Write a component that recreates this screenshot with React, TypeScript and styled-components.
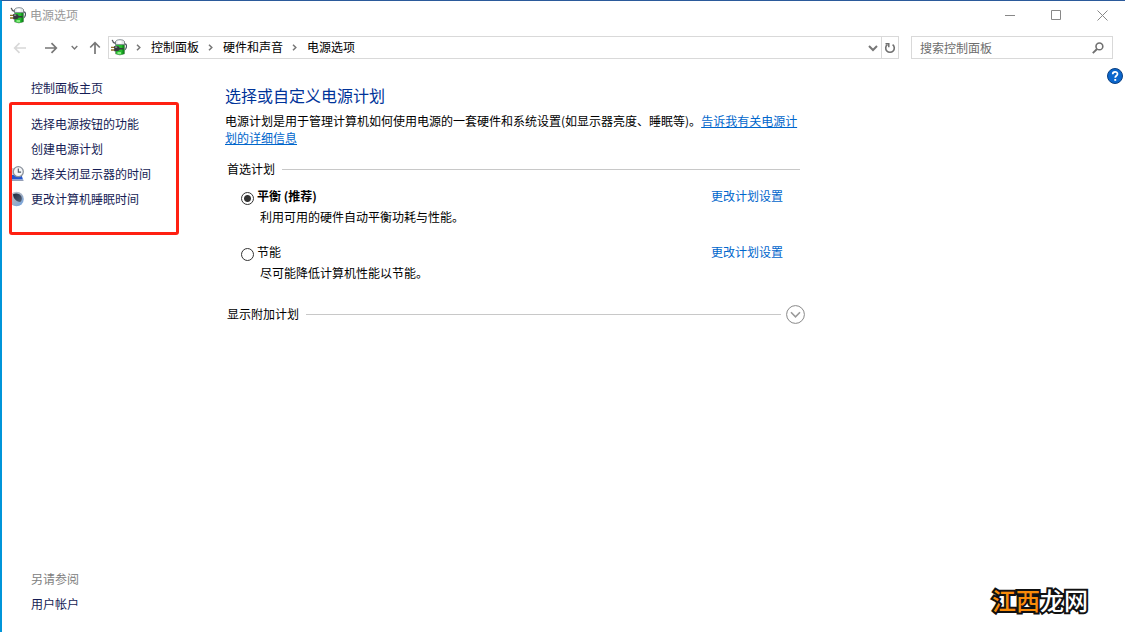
import React, { useState } from "react";
import styled, { createGlobalStyle } from "styled-components";

const GlobalStyle = createGlobalStyle`
  *, *::before, *::after { box-sizing: border-box; }
  body {
    margin: 0;
    background: #fff;
    color: #000;
    font: 12px/17px "Noto Sans CJK SC", sans-serif;
  }
  button, input { font: inherit; color: inherit; }
  svg { display: block; flex: none; }
`;

const Window = styled.div`
  position: relative;
  display: flex;
  flex-direction: column;
  min-height: 100vh;
  border-left: 2px solid #0095d9;
  border-top: 1px solid #2b5a9b;
`;

const TitleBar = styled.header`
  display: flex;
  align-items: center;
  height: 29px;
  padding-left: 8px;
`;

const WindowTitle = styled.span`
  flex: 1;
  margin-left: 4px;
  padding-bottom: 2px;
  color: #999;
`;

const PlainButton = styled.button`
  display: flex;
  align-items: center;
  justify-content: center;
  padding: 0;
  border: 0;
  background: none;
`;

const CaptionButton = styled(PlainButton)`
  width: 46px;
  height: 29px;
`;

const NavBar = styled.div`
  display: flex;
  align-items: center;
  height: 35px;
  padding: 0 12px 0 11px;
`;

const ArrowButton = styled(PlainButton)<{ $gap: number }>`
  margin-right: ${(p) => p.$gap}px;
`;

const AddressBar = styled.nav`
  display: flex;
  flex: 1;
  align-items: center;
  height: 23px;
  padding-left: 2px;
  border: 1px solid #d9d9d9;
`;

const Crumb = styled.a`
  padding-bottom: 2px;
  color: #000;
  text-decoration: none;
`;

const CrumbArrow = styled.svg`
  margin: 0 10px 0 9px;
`;

const DropButton = styled(PlainButton)`
  width: 16px;
  height: 21px;
  margin-left: auto;
`;

const RefreshButton = styled(PlainButton)`
  width: 17px;
  height: 21px;
  border-left: 1px solid #d9d9d9;
`;

const SearchBox = styled.label`
  display: flex;
  align-items: center;
  width: 202px;
  height: 23px;
  margin-left: 12px;
  padding: 0 8px;
  border: 1px solid #d9d9d9;
`;

const SearchInput = styled.input`
  flex: 1;
  min-width: 0;
  height: 17px;
  padding: 0;
  border: 0;
  outline: 0;
  background: none;
  &::placeholder { color: #6d6d6d; opacity: 1; }
`;

const Body = styled.div`
  display: flex;
  flex: 1;
`;

const Sidebar = styled.aside`
  display: flex;
  flex: none;
  flex-direction: column;
  width: 223px;
  padding: 10px 0 16px 7px;
  line-height: 25px;
`;

const SideLink = styled.a`
  display: flex;
  align-items: center;
  height: 25px;
  padding-left: 22px;
  color: #151c55;
  text-decoration: none;
`;

const TaskLink = styled(SideLink)`
  padding-left: 0;
`;

const TaskIcon = styled.span`
  width: 22px;
`;

const TaskList = styled.nav`
  position: relative;
  width: 170px;
  margin-top: 2px;
  padding: 9px 0 24px;
  &::after {
    content: "";
    position: absolute;
    inset: 0;
    border: 3px solid #ff2012;
    border-radius: 3px;
    pointer-events: none;
  }
`;

const SeeAlso = styled.div`
  margin-top: auto;
`;

const SeeAlsoTitle = styled.div`
  padding-left: 22px;
  color: #808080;
`;

const Main = styled.main`
  flex: 1;
  max-width: 580px;
  padding-top: 18px;
`;

const Heading = styled.h1`
  margin: 0;
  color: #003399;
  font-size: 16px;
  font-weight: 400;
  line-height: 24px;
`;

const Intro = styled.p`
  margin: 5px 7px 0 0;
`;

const BlueLink = styled.a<{ $underline?: boolean }>`
  color: #0066cc;
  text-decoration: ${(p) => (p.$underline ? "underline" : "none")};
`;

const SectionHead = styled.div<{ $top: number; $right: number }>`
  display: flex;
  align-items: center;
  height: 20px;
  margin: ${(p) => p.$top}px ${(p) => p.$right}px 0 2px;
`;

const SectionTitle = styled.h2`
  margin: 0;
  padding-bottom: 2px;
  font-size: 12px;
  font-weight: 400;
  line-height: 17px;
`;

const Rule = styled.span<{ $right?: number }>`
  flex: 1;
  height: 1px;
  margin: 0 ${(p) => p.$right ?? 0}px 0 7px;
  background: #c8c8c8;
`;

const PlanRow = styled.div`
  display: grid;
  grid-template-columns: 16px 1fr auto;
  row-gap: 3px;
  margin: 8px 22px 0 16px;
  & + & { margin-top: 18px; }
`;

const Radio = styled.input`
  appearance: none;
  width: 13px;
  height: 13px;
  margin: 5px 0 0;
  border: 1px solid #333;
  border-radius: 50%;
  background: #fff;
  &:checked { background: radial-gradient(circle, #333 3px, #fff 4px); }
`;

const PlanLabel = styled.label<{ $strong: boolean }>`
  font-weight: ${(p) => (p.$strong ? 700 : 400)};
`;

const PlanText = styled.p`
  grid-column: 2 / 4;
  margin: 0 0 0 3px;
`;

const HelpButton = styled(PlainButton)`
  align-self: flex-start;
  margin: 3px 2px 0 auto;
`;

const Watermark = styled.div`
  position: absolute;
  right: 37px;
  bottom: 17px;
  color: #fff;
  font-size: 24px;
  font-weight: 500;
  line-height: 30px;
  paint-order: stroke fill;
  -webkit-text-stroke: 4px #111;
`;

const WatermarkAccent = styled.span`
  color: #f98b0a;
`;

const PowerIcon = () => (
  <svg width="16" height="17" viewBox="0 0 16 17" aria-hidden="true">
    <path d="M13 4.800h.8q1.900.2 1.700 2.700-.2 2.600-2.500 4" fill="none" stroke="#4a5560" strokeWidth="1.200" />
    <path d="M4.500 2.500v12.300q4.200 2.200 9 0V2.500z" fill="#eef3ee" stroke="#69756c" strokeWidth=".7" />
    <path d="M4.800 5.500h8.400v9.200q-4.200 1.900-8.400 0z" fill="#27bb30" />
    <path d="M11.400 5.500h1.800v9.200l-1.800.6z" fill="#118a1c" />
    <path d="M6.500 13h3.500v2H6.500z" fill="#86ec7e" />
    <path d="M4.500 2.700Q5 .6 9 .6t4.500 2.100v2.800h-9z" fill="#e3e7ea" stroke="#6c757b" strokeWidth=".7" />
    <path d="M6.500 1.800h4v2.900h-4z" fill="#fff" />
    <path d="M1.200.8q.5 2.600 3.300 3.700" fill="none" stroke="#55595d" strokeWidth="1.300" />
    <path d="M0 8.300h4M0 11h4" stroke="#8d6f25" strokeWidth="1.300" />
    <path d="M3.200 7h2.600q2.400.2 2.900 1.900h3.800v1.500H8.700q-.6 1.700-2.900 1.900H3.200z" fill="#36393d" />
    <path d="M4 8.100h2.200" stroke="#b3b7ba" />
  </svg>
);

const CrumbChevron = () => (
  <CrumbArrow width="5" height="7" viewBox="0 0 5 7" aria-hidden="true">
    <path d="M1 .8 3.800 3.500 1 6.200" fill="none" stroke="#777" strokeWidth="1.500" />
  </CrumbArrow>
);

const DownChevron = ({ size, color }: { size: number; color: string }) => (
  <svg width={size} height={size} viewBox="0 0 10 10" aria-hidden="true">
    <path d="m1 3 4 4 4-4" fill="none" stroke={color} strokeWidth="2" />
  </svg>
);

const LeftArrow = ({ color, turn }: { color: string; turn: number }) => (
  <svg width="14" height="14" viewBox="0 0 14 14" aria-hidden="true">
    <path
      d="M13 7H2M6.500 2.200 1.700 7l4.800 4.800"
      transform={`rotate(${turn} 7 7)`}
      fill="none"
      stroke={color}
      strokeWidth="1.700"
    />
  </svg>
);

const DisplayClockIcon = () => (
  <svg width="16" height="16" viewBox="0 0 16 16" aria-hidden="true">
    <path d="M0 2h12v11H0z" fill="#c9cfdb" />
    <path d="M3 9h9.500l1.500 4.500H3z" fill="#2456cf" />
    <path d="M3 14.300h11.500" stroke="#8a94ad" strokeWidth="1.200" />
    <circle cx="9.300" cy="5.700" r="5" fill="#f5f6f8" stroke="#8b929c" strokeWidth="1.300" />
    <path d="M9.300 2.600v3.500h2.800" fill="none" stroke="#4b5462" strokeWidth="1.100" />
  </svg>
);

const MoonIcon = () => (
  <svg width="16" height="16" viewBox="0 0 16 16" aria-hidden="true">
    <defs>
      <linearGradient id="moon" x1="0" y1="0" x2="1" y2="1">
        <stop offset="0" stopColor="#c9ced6" />
        <stop offset=".5" stopColor="#a3afc2" />
        <stop offset="1" stopColor="#6ba3e6" />
      </linearGradient>
      <linearGradient id="shade" x1="0" y1="0" x2="1" y2="1">
        <stop offset="0" stopColor="#1f2a3c" />
        <stop offset="1" stopColor="#56657d" />
      </linearGradient>
    </defs>
    <circle cx="7.500" cy="8" r="7.300" fill="url(#moon)" />
    <path d="M4 3.200C7.200 1.600 11.200 2.600 12.500 5.800c.8 2.600 0 4.400-1.300 5.200C7.200 10.500 4.200 7.500 4 3.200Z" fill="url(#shade)" />
  </svg>
);

const plans = [
  { id: "balanced", name: "平衡 (推荐)", text: "利用可用的硬件自动平衡功耗与性能。" },
  { id: "saver", name: "节能", text: "尽可能降低计算机性能以节能。" },
];

const tasks = [
  { name: "选择电源按钮的功能", icon: null },
  { name: "创建电源计划", icon: null },
  { name: "选择关闭显示器的时间", icon: <DisplayClockIcon /> },
  { name: "更改计算机睡眠时间", icon: <MoonIcon /> },
];

const crumbs = ["控制面板", "硬件和声音", "电源选项"];

export default function App() {
  const [plan, setPlan] = useState("balanced");

  return (
    <>
      <GlobalStyle />
      <Window>
        <TitleBar>
          <PowerIcon />
          <WindowTitle>电源选项</WindowTitle>
          <CaptionButton aria-label="最小化">
            <svg width="11" height="11" viewBox="0 0 11 11"><path d="M0 5.500h10" stroke="#888" /></svg>
          </CaptionButton>
          <CaptionButton aria-label="最大化">
            <svg width="11" height="11" viewBox="0 0 11 11"><path d="M.5.5h9v9h-9z" fill="none" stroke="#888" /></svg>
          </CaptionButton>
          <CaptionButton aria-label="关闭">
            <svg width="11" height="11" viewBox="0 0 11 11"><path d="m.5.5 10 10m0-10-10 10" stroke="#888" /></svg>
          </CaptionButton>
        </TitleBar>

        <NavBar>
          <ArrowButton $gap={17} aria-label="后退" disabled><LeftArrow color="#d8d8d8" turn={0} /></ArrowButton>
          <ArrowButton $gap={13} aria-label="前进"><LeftArrow color="#777" turn={180} /></ArrowButton>
          <ArrowButton $gap={10} aria-label="最近的位置"><DownChevron size={7} color="#777" /></ArrowButton>
          <ArrowButton $gap={6} aria-label="上一级"><LeftArrow color="#777" turn={90} /></ArrowButton>
          <AddressBar aria-label="地址">
            <PowerIcon />
            {crumbs.map((name) => (
              <React.Fragment key={name}>
                <CrumbChevron />
                <Crumb href="#">{name}</Crumb>
              </React.Fragment>
            ))}
            <DropButton aria-label="以前的位置"><DownChevron size={10} color="#777" /></DropButton>
            <RefreshButton aria-label="刷新">
              <svg width="12" height="12" viewBox="0 0 12 12">
                <path d="M8.600 2.600a4.300 4.300 0 1 1-5.200 0" fill="none" stroke="#707070" strokeWidth="1.600" />
                <path d="M1.500 1.800h3.300v3.400" fill="none" stroke="#707070" strokeWidth="1.500" />
              </svg>
            </RefreshButton>
          </AddressBar>
          <SearchBox>
            <SearchInput type="search" placeholder="搜索控制面板" aria-label="搜索控制面板" />
            <svg width="12" height="12" viewBox="0 0 12 12" aria-hidden="true">
              <circle cx="7.400" cy="4.400" r="3.400" fill="none" stroke="#707070" strokeWidth="1.600" />
              <path d="M5 7 .8 11.200" stroke="#707070" strokeWidth="1.900" />
            </svg>
          </SearchBox>
        </NavBar>

        <Body>
          <Sidebar>
            <SideLink href="#">控制面板主页</SideLink>
            <TaskList aria-label="任务">
              {tasks.map((task) => (
                <TaskLink href="#" key={task.name}>
                  <TaskIcon>{task.icon}</TaskIcon>
                  {task.name}
                </TaskLink>
              ))}
            </TaskList>
            <SeeAlso>
              <SeeAlsoTitle>另请参阅</SeeAlsoTitle>
              <SideLink href="#">用户帐户</SideLink>
            </SeeAlso>
          </Sidebar>

          <Main>
            <Heading>选择或自定义电源计划</Heading>
            <Intro>
              电源计划是用于管理计算机如何使用电源的一套硬件和系统设置(如显示器亮度、睡眠等)。
              <BlueLink $underline href="#">告诉我有关电源计划的详细信息</BlueLink>
            </Intro>

            <SectionHead $top={13} $right={5}>
              <SectionTitle id="preferred">首选计划</SectionTitle>
              <Rule />
            </SectionHead>
            <div role="radiogroup" aria-labelledby="preferred">
              {plans.map((p) => (
                <PlanRow key={p.id}>
                  <Radio
                    type="radio"
                    name="plan"
                    id={p.id}
                    checked={plan === p.id}
                    onChange={() => setPlan(p.id)}
                  />
                  <PlanLabel htmlFor={p.id} $strong={plan === p.id}>{p.name}</PlanLabel>
                  <BlueLink href="#">更改计划设置</BlueLink>
                  <PlanText>{p.text}</PlanText>
                </PlanRow>
              ))}
            </div>

            <SectionHead $top={23} $right={0}>
              <SectionTitle>显示附加计划</SectionTitle>
              <Rule $right={5} />
              <PlainButton aria-label="展开附加计划">
                <svg width="19" height="19" viewBox="0 0 19 19">
                  <circle cx="9.500" cy="9.500" r="8.900" fill="#fff" stroke="#888" />
                  <path d="m5 7.300 4.500 4.500L14 7.300" fill="none" stroke="#999" strokeWidth="1.600" />
                </svg>
              </PlainButton>
            </SectionHead>
          </Main>

          <HelpButton aria-label="帮助">
            <svg width="16" height="16" viewBox="0 0 16 16">
              <circle cx="8" cy="8" r="7.500" fill="#0a66cc" stroke="#0b3f80" />
              <path d="M5.700 6.200c0-3.200 4.800-3.100 4.800-.3C10.500 7.700 8.200 7.800 8.200 9.700" fill="none" stroke="#fff" strokeWidth="1.700" />
              <path d="M7.300 11h1.900v1.800H7.300z" fill="#fff" />
            </svg>
          </HelpButton>
        </Body>
        <Watermark><WatermarkAccent>江西</WatermarkAccent>龙网</Watermark>
      </Window>
    </>
  );
}
